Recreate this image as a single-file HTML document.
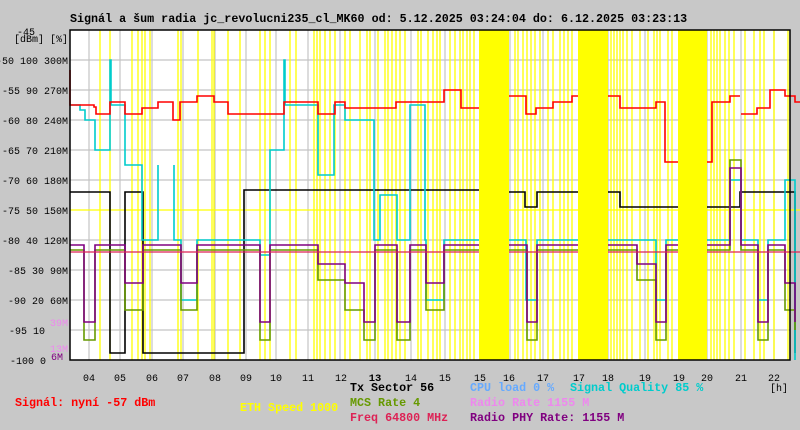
<!DOCTYPE html>
<html><head><meta charset="utf-8"><style>
html,body{margin:0;padding:0;background:#c8c8c8;}
svg{display:block;}
text{font-family:"Liberation Mono",monospace;font-weight:bold;font-size:11.7px;}
text.s{font-weight:normal;font-size:10px;}
</style></head><body>
<svg width="800" height="430" xmlns="http://www.w3.org/2000/svg">
<rect width="800" height="430" fill="#c8c8c8"/>
<rect x="70" y="30" width="720" height="330" fill="#fff"/>
<g stroke="#c4c4c4" stroke-width="1.2">
<line x1="70" y1="60" x2="790" y2="60"/><line x1="70" y1="90" x2="790" y2="90"/><line x1="70" y1="120" x2="790" y2="120"/><line x1="70" y1="150" x2="790" y2="150"/><line x1="70" y1="180" x2="790" y2="180"/><line x1="70" y1="240" x2="790" y2="240"/><line x1="70" y1="270" x2="790" y2="270"/><line x1="70" y1="300" x2="790" y2="300"/><line x1="70" y1="330" x2="790" y2="330"/>
<line x1="89" y1="30" x2="89" y2="360"/><line x1="120" y1="30" x2="120" y2="360"/><line x1="152" y1="30" x2="152" y2="360"/><line x1="183" y1="30" x2="183" y2="360"/><line x1="215" y1="30" x2="215" y2="360"/><line x1="246" y1="30" x2="246" y2="360"/><line x1="276" y1="30" x2="276" y2="360"/><line x1="308" y1="30" x2="308" y2="360"/><line x1="340" y1="30" x2="340" y2="360"/><line x1="375" y1="30" x2="375" y2="360"/><line x1="411" y1="30" x2="411" y2="360"/><line x1="445" y1="30" x2="445" y2="360"/><line x1="510" y1="30" x2="510" y2="360"/><line x1="543" y1="30" x2="543" y2="360"/><line x1="608" y1="30" x2="608" y2="360"/><line x1="645" y1="30" x2="645" y2="360"/><line x1="707" y1="30" x2="707" y2="360"/><line x1="741" y1="30" x2="741" y2="360"/><line x1="774" y1="30" x2="774" y2="360"/>
</g>
<g stroke="#ffff00" stroke-width="1.3">
<line x1="100" y1="30" x2="100" y2="360"/><line x1="110" y1="30" x2="110" y2="360"/><line x1="132" y1="30" x2="132" y2="360"/><line x1="138" y1="30" x2="138" y2="360"/><line x1="142" y1="30" x2="142" y2="360"/><line x1="145" y1="30" x2="145" y2="360"/><line x1="150" y1="30" x2="150" y2="360"/><line x1="178" y1="30" x2="178" y2="360"/><line x1="181" y1="30" x2="181" y2="360"/><line x1="198" y1="30" x2="198" y2="360"/><line x1="212" y1="30" x2="212" y2="360"/><line x1="214" y1="30" x2="214" y2="360"/><line x1="228" y1="30" x2="228" y2="360"/><line x1="240" y1="30" x2="240" y2="360"/><line x1="260" y1="30" x2="260" y2="360"/><line x1="265" y1="30" x2="265" y2="360"/><line x1="270" y1="30" x2="270" y2="360"/><line x1="290" y1="30" x2="290" y2="360"/><line x1="296" y1="30" x2="296" y2="360"/><line x1="314" y1="30" x2="314" y2="360"/><line x1="317" y1="30" x2="317" y2="360"/><line x1="320" y1="30" x2="320" y2="360"/><line x1="325" y1="30" x2="325" y2="360"/><line x1="330" y1="30" x2="330" y2="360"/><line x1="335" y1="30" x2="335" y2="360"/><line x1="345" y1="30" x2="345" y2="360"/><line x1="350" y1="30" x2="350" y2="360"/><line x1="360" y1="30" x2="360" y2="360"/><line x1="367" y1="30" x2="367" y2="360"/><line x1="370" y1="30" x2="370" y2="360"/><line x1="378" y1="30" x2="378" y2="360"/><line x1="385" y1="30" x2="385" y2="360"/><line x1="388" y1="30" x2="388" y2="360"/><line x1="392" y1="30" x2="392" y2="360"/><line x1="396" y1="30" x2="396" y2="360"/><line x1="400" y1="30" x2="400" y2="360"/><line x1="405" y1="30" x2="405" y2="360"/><line x1="418" y1="30" x2="418" y2="360"/><line x1="421" y1="30" x2="421" y2="360"/><line x1="428" y1="30" x2="428" y2="360"/><line x1="433" y1="30" x2="433" y2="360"/><line x1="437" y1="30" x2="437" y2="360"/><line x1="440" y1="30" x2="440" y2="360"/><line x1="450" y1="30" x2="450" y2="360"/><line x1="455" y1="30" x2="455" y2="360"/><line x1="460" y1="30" x2="460" y2="360"/><line x1="463" y1="30" x2="463" y2="360"/><line x1="467" y1="30" x2="467" y2="360"/><line x1="470" y1="30" x2="470" y2="360"/><line x1="474" y1="30" x2="474" y2="360"/><line x1="515" y1="30" x2="515" y2="360"/><line x1="518" y1="30" x2="518" y2="360"/><line x1="523" y1="30" x2="523" y2="360"/><line x1="527" y1="30" x2="527" y2="360"/><line x1="531" y1="30" x2="531" y2="360"/><line x1="535" y1="30" x2="535" y2="360"/><line x1="540" y1="30" x2="540" y2="360"/><line x1="548" y1="30" x2="548" y2="360"/><line x1="553" y1="30" x2="553" y2="360"/><line x1="560" y1="30" x2="560" y2="360"/><line x1="564" y1="30" x2="564" y2="360"/><line x1="568" y1="30" x2="568" y2="360"/><line x1="572" y1="30" x2="572" y2="360"/><line x1="611" y1="30" x2="611" y2="360"/><line x1="614" y1="30" x2="614" y2="360"/><line x1="617" y1="30" x2="617" y2="360"/><line x1="620" y1="30" x2="620" y2="360"/><line x1="623" y1="30" x2="623" y2="360"/><line x1="627" y1="30" x2="627" y2="360"/><line x1="632" y1="30" x2="632" y2="360"/><line x1="640" y1="30" x2="640" y2="360"/><line x1="648" y1="30" x2="648" y2="360"/><line x1="654" y1="30" x2="654" y2="360"/><line x1="657" y1="30" x2="657" y2="360"/><line x1="660" y1="30" x2="660" y2="360"/><line x1="668" y1="30" x2="668" y2="360"/><line x1="672" y1="30" x2="672" y2="360"/><line x1="711" y1="30" x2="711" y2="360"/><line x1="714" y1="30" x2="714" y2="360"/><line x1="717" y1="30" x2="717" y2="360"/><line x1="720" y1="30" x2="720" y2="360"/><line x1="725" y1="30" x2="725" y2="360"/><line x1="729" y1="30" x2="729" y2="360"/><line x1="734" y1="30" x2="734" y2="360"/><line x1="745" y1="30" x2="745" y2="360"/><line x1="754" y1="30" x2="754" y2="360"/><line x1="760" y1="30" x2="760" y2="360"/><line x1="764" y1="30" x2="764" y2="360"/><line x1="774" y1="30" x2="774" y2="360"/><line x1="788" y1="30" x2="788" y2="360"/>
<line x1="70" y1="210" x2="800" y2="210"/>
</g>
<g fill="none" stroke-width="1.6">
<path stroke="#000" d="M70,192H110V353H125V192H143V353H244V190H479M509,192H525V207H537V192H578M608,192H620V207H678M707,207H740V192H795V353"/>
<path stroke="#00cccc" d="M70,105H80V110H85V120H95V150H110V60H111V105H125V165H142V240H158V165M174,165V240H181V300H197V240H260V255H270V150H284V60H285V105H318V175H334V105H345V120H374V240H380V195H397V240H410V105H425V240H426V300H444V240H479M509,240H526V300H537V240H578M608,240H656V300H666V240H678M707,240H730V180H741V240H758V300H768V240H785V180H795V360"/>
<path stroke="#669900" d="M70,250H84V340H95V250H125V310H143V250H181V310H197V250H260V340H270V250H318V280H345V310H364V340H375V250H397V340H410V250H426V310H444V250H479M509,250H527V340H537V250H578M608,250H637V280H656V340H666V250H678M707,250H730V160H741V250H758V340H768V250H785V310H795V330"/>
<path stroke="#800080" d="M70,245H84V322H95V245H125V283H143V245H181V283H197V245H260V322H270V245H318V264H345V283H364V322H375V245H397V322H410V245H426V283H444V245H479M509,245H527V322H537V245H578M608,245H637V264H656V322H666V245H678M707,245H730V168H741V245H758V322H768V245H785V283H795V322"/>
<path stroke="#dd2255" stroke-width="1.3" d="M70,252H800"/>
<path stroke="#ff0000" d="M70,70V105H94V107H96V114H110V102H125V114H142V108H158V102H173V120H180V102H197V96H214V102H228V114H284V102H318V114H335V102H345V108H396V102H444V90H461V108H479M509,96H526V114H536V108H553V102H572V96H578M608,96H620V108H656V102H665V162H678M707,162H712V102H730V96H740M741,114H757V108H770V90H785V96H795V102H800"/>
</g>
<g fill="#ffff00">
<rect x="479" y="30" width="30" height="330"/><rect x="578" y="30" width="30" height="330"/><rect x="678" y="30" width="29" height="330"/>
</g>
<rect x="70" y="30" width="720" height="330" fill="none" stroke="#000" stroke-width="1.5"/>
<text x="70" y="22">Signál a šum radia jc_revolucni235_cl_MK60 od: 5.12.2025 03:24:04 do: 6.12.2025 03:23:13</text>
<g text-anchor="end">
<text class="s" x="35" y="35">-45</text>
<text class="s" x="68" y="42">[dBm] [%]</text>
<text class="s" x="68" y="64">-50 100 300M</text>
<text class="s" x="68" y="94">-55 90 270M</text>
<text class="s" x="68" y="124">-60 80 240M</text>
<text class="s" x="68" y="154">-65 70 210M</text>
<text class="s" x="68" y="184">-70 60 180M</text>
<text class="s" x="68" y="214">-75 50 150M</text>
<text class="s" x="68" y="244">-80 40 120M</text>
<text class="s" x="68" y="274">-85 30 90M</text>
<text class="s" x="68" y="304">-90 20 60M</text>
<text class="s" x="45" y="334">-95 10</text>
<text class="s" x="68" y="326" fill="#ee88ee">39M</text>
<text class="s" x="68" y="352" fill="#ee88ee">13M</text>
<text class="s" x="63" y="360" fill="#800080">6M</text>
<text class="s" x="46" y="364">-100 0</text>
</g>
<g text-anchor="middle">
<text class="s" x="89" y="381">04</text><text class="s" x="120" y="381">05</text><text class="s" x="152" y="381">06</text><text class="s" x="183" y="381">07</text><text class="s" x="215" y="381">08</text><text class="s" x="246" y="381">09</text><text class="s" x="276" y="381">10</text><text class="s" x="308" y="381">11</text><text class="s" x="341" y="381">12</text><text x="375" y="381" style="font-size:10.5px">13</text><text class="s" x="411" y="381">14</text><text class="s" x="445" y="381">15</text><text class="s" x="480" y="381">15</text><text class="s" x="509" y="381">16</text><text class="s" x="543" y="381">17</text><text class="s" x="579" y="381">17</text><text class="s" x="608" y="381">18</text><text class="s" x="645" y="381">19</text><text class="s" x="679" y="381">19</text><text class="s" x="707" y="381">20</text><text class="s" x="741" y="381">21</text><text class="s" x="774" y="381">22</text>
</g>
<text class="s" x="770" y="391">[h]</text>
<text x="350" y="391" fill="#000">Tx Sector 56</text>
<text x="470" y="391" fill="#66aaff">CPU load 0 %</text>
<text x="570" y="391" fill="#00cccc">Signal Quality 85 %</text>
<text x="15" y="406" fill="#ff0000">Signál: nyní -57 dBm</text>
<text x="350" y="406" fill="#669900">MCS Rate 4</text>
<text x="470" y="406" fill="#ee88ee">Radio Rate 1155 M</text>
<text x="240" y="411" fill="#ffff00">ETH Speed 1000</text>
<text x="350" y="421" fill="#dd2255">Freq 64800 MHz</text>
<text x="470" y="421" fill="#800080">Radio PHY Rate: 1155 M</text>
</svg>
</body></html>
